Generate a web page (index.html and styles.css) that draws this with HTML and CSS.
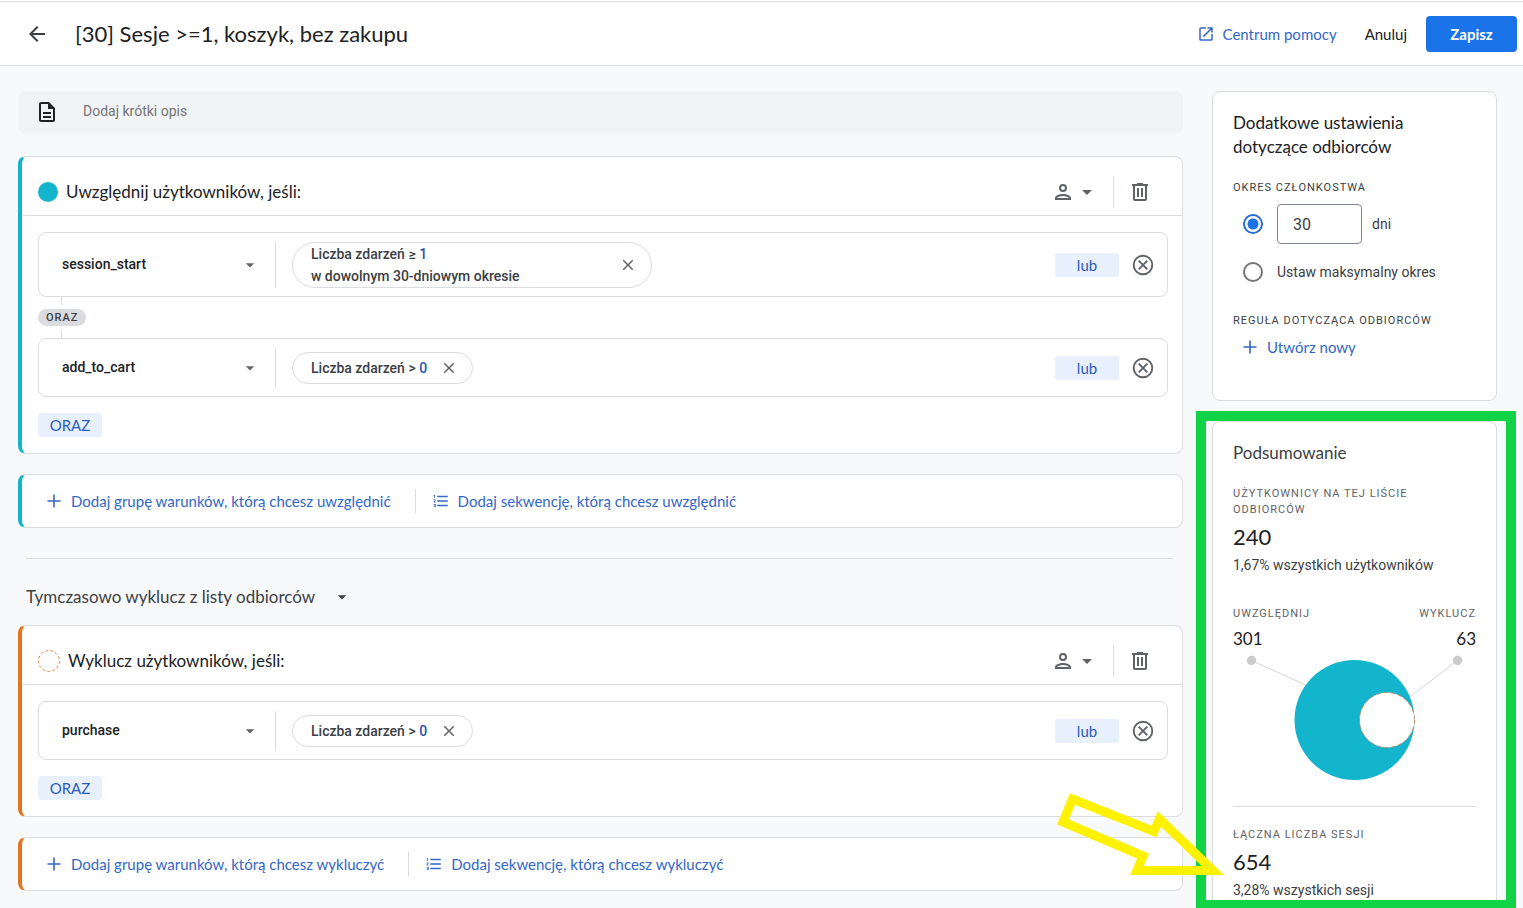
FILE: index.html
```html
<!DOCTYPE html>
<html lang="pl">
<head>
<meta charset="utf-8">
<title>Edytor listy odbiorców</title>
<link rel="stylesheet" href="styles.css">
</head>
<body>
<svg class="sprite" aria-hidden="true">
  <symbol id="i-caret" viewBox="0 0 24 24"><path d="M7 10l5 5 5-5z"/></symbol>
  <symbol id="i-close" viewBox="0 0 24 24"><path d="M19 6.41L17.59 5 12 10.59 6.41 5 5 6.41 10.59 12 5 17.59 6.41 19 12 13.41 17.59 19 19 17.59 13.41 12z"/></symbol>
  <symbol id="i-remove" viewBox="0 0 24 24"><path d="M7.700 7.700l8.600 8.600M16.300 7.700l-8.600 8.600M21.300 12a9.300 9.300 0 1 1-18.600 0 9.300 9.300 0 0 1 18.600 0z" fill="none" stroke="currentColor" stroke-width="1.900"/></symbol>
  <symbol id="i-plus" viewBox="0 0 14 14"><path d="M6.2 0.5h1.6v5.7h5.7v1.6H7.8v5.7H6.2V7.800H.5V6.200h5.700z"/></symbol>
  <symbol id="i-list" viewBox="0 0 24 24"><path d="M2 17h2v.5H3v1h1v.5H2v1h3v-4H2zm1-9h1V4H2v1h1zm-1 3h1.800L2 13.100v.9h3v-1H3.200L5 10.900V10H2zM7 5v2h14V5zm0 14h14v-2H7zm0-6h14v-2H7z"/></symbol>
  <symbol id="i-person" viewBox="0 0 24 24"><path d="M12 6a2 2 0 1 1 0 4 2 2 0 0 1 0-4m0 10c2.700 0 5.800 1.290 6 2H6c.23-.72 3.310-2 6-2m0-12a4 4 0 1 0 0 8 4 4 0 0 0 0-8zm0 10c-2.670 0-8 1.340-8 4v2h16v-2c0-2.660-5.330-4-8-4z"/></symbol>
  <symbol id="i-trash" viewBox="0 0 24 24"><path d="M15 4V3H9v1H4v2h1v13a2 2 0 0 0 2 2h10a2 2 0 0 0 2-2V6h1V4zm2 15H7V6h10zM9 8h2v9H9zm4 0h2v9h-2z"/></symbol>
</svg>

<header class="topbar">
  <button class="icon-btn back" aria-label="Wstecz"><svg class="icon" viewBox="0 0 24 24"><path d="M20 11H7.830l5.590-5.590L12 4l-8 8 8 8 1.410-1.410L7.830 13H20z"/></svg></button>
  <h1 class="title">[30] Sesje &gt;=1, koszyk, bez zakupu</h1>
  <a class="help" href="#"><svg class="icon-18" viewBox="0 0 24 24"><path d="M19 19H5V5h7V3H5a2 2 0 0 0-2 2v14a2 2 0 0 0 2 2h14a2 2 0 0 0 2-2v-7h-2zM14 3v2h3.590l-9.830 9.830 1.410 1.410L19 6.410V10h2V3z"/></svg>Centrum pomocy</a>
  <button class="cancel">Anuluj</button>
  <button class="save">Zapisz</button>
</header>

<div class="layout">
  <main class="main">
    <label class="describe">
      <svg class="icon" viewBox="0 0 24 24"><path d="M8 16h8v2H8zm0-4h8v2H8zM14 2H6a2 2 0 0 0-2 2v16a2 2 0 0 0 2 2h12a2 2 0 0 0 2-2V8zm4 18H6V4h7v5h5z"/></svg>
      <input class="describe-input" type="text" placeholder="Dodaj krótki opis" aria-label="Dodaj krótki opis">
    </label>

    <section class="card include group">
      <div class="group-head">
        <span class="dot"></span>
        <h2 class="group-title">Uwzględnij użytkowników, jeśli:</h2>
        <button class="icon-btn scope" aria-label="Zakres"><svg class="icon"><use href="#i-person"/></svg><svg class="icon"><use href="#i-caret"/></svg></button>
        <button class="icon-btn trash" aria-label="Usuń grupę"><svg class="icon"><use href="#i-trash"/></svg></button>
      </div>
      <div class="group-body">
        <div class="row">
          <div class="event"><select class="event-select" aria-label="Zdarzenie"><option>session_start</option></select><svg class="icon-20"><use href="#i-caret"/></svg></div>
          <div class="pill wide"><span>Liczba zdarzeń ≥ <b>1</b><br>w dowolnym 30-dniowym okresie</span><button class="icon-btn" aria-label="Usuń parametr"><svg class="icon-18"><use href="#i-close"/></svg></button></div>
          <button class="chip or">lub</button>
          <button class="icon-btn remove" aria-label="Usuń warunek"><svg class="icon"><use href="#i-remove"/></svg></button>
        </div>
        <div class="joint"><span class="tag">ORAZ</span></div>
        <div class="row">
          <div class="event"><select class="event-select" aria-label="Zdarzenie"><option>add_to_cart</option></select><svg class="icon-20"><use href="#i-caret"/></svg></div>
          <div class="pill"><span>Liczba zdarzeń &gt; <b>0</b></span><button class="icon-btn" aria-label="Usuń parametr"><svg class="icon-18"><use href="#i-close"/></svg></button></div>
          <button class="chip or">lub</button>
          <button class="icon-btn remove" aria-label="Usuń warunek"><svg class="icon"><use href="#i-remove"/></svg></button>
        </div>
        <button class="chip and">ORAZ</button>
      </div>
    </section>

    <section class="card include adder">
      <button class="link"><svg class="icon-14"><use href="#i-plus"/></svg>Dodaj grupę warunków, którą chcesz uwzględnić</button>
      <button class="link seq"><svg class="icon-18"><use href="#i-list"/></svg>Dodaj sekwencję, którą chcesz uwzględnić</button>
    </section>

    <hr class="split">

    <div class="exclude-mode">
      <select class="mode-select" aria-label="Tryb wykluczania"><option>Tymczasowo wyklucz z listy odbiorców</option></select><svg class="icon-20"><use href="#i-caret"/></svg>
    </div>

    <section class="card exclude group">
      <div class="group-head">
        <svg class="ring" viewBox="0 0 22 22"><circle cx="11" cy="11" r="10.400"/></svg>
        <h2 class="group-title">Wyklucz użytkowników, jeśli:</h2>
        <button class="icon-btn scope" aria-label="Zakres"><svg class="icon"><use href="#i-person"/></svg><svg class="icon"><use href="#i-caret"/></svg></button>
        <button class="icon-btn trash" aria-label="Usuń grupę"><svg class="icon"><use href="#i-trash"/></svg></button>
      </div>
      <div class="group-body">
        <div class="row">
          <div class="event"><select class="event-select" aria-label="Zdarzenie"><option>purchase</option></select><svg class="icon-20"><use href="#i-caret"/></svg></div>
          <div class="pill"><span>Liczba zdarzeń &gt; <b>0</b></span><button class="icon-btn" aria-label="Usuń parametr"><svg class="icon-18"><use href="#i-close"/></svg></button></div>
          <button class="chip or">lub</button>
          <button class="icon-btn remove" aria-label="Usuń warunek"><svg class="icon"><use href="#i-remove"/></svg></button>
        </div>
        <button class="chip and">ORAZ</button>
      </div>
    </section>

    <section class="card exclude adder">
      <button class="link"><svg class="icon-14"><use href="#i-plus"/></svg>Dodaj grupę warunków, którą chcesz wykluczyć</button>
      <button class="link seq"><svg class="icon-18"><use href="#i-list"/></svg>Dodaj sekwencję, którą chcesz wykluczyć</button>
    </section>
  </main>

  <aside class="side">
    <section class="panel settings">
      <h2 class="panel-title">Dodatkowe ustawienia dotyczące odbiorców</h2>
      <h3 class="caps">Okres członkostwa</h3>
      <div class="option">
        <input class="radio" type="radio" name="period" id="p-days" checked>
        <input class="days" type="text" value="30" aria-label="Liczba dni">
        <label for="p-days">dni</label>
      </div>
      <div class="option max">
        <input class="radio" type="radio" name="period" id="p-max">
        <label for="p-max">Ustaw maksymalny okres</label>
      </div>
      <h3 class="caps">Reguła dotycząca odbiorców</h3>
      <button class="link create"><svg class="icon-14"><use href="#i-plus"/></svg>Utwórz nowy</button>
    </section>

    <div class="highlight">
      <section class="panel summary">
        <h2 class="panel-title">Podsumowanie</h2>
        <h3 class="caps">Użytkownicy na tej liście odbiorców</h3>
        <p class="big">240</p>
        <p class="note">1,67% wszystkich użytkowników</p>
        <div class="ends">
          <div><h3 class="caps">Uwzględnij</h3><p class="mid">301</p></div>
          <div class="end-right"><h3 class="caps">Wyklucz</h3><p class="mid">63</p></div>
        </div>
        <svg class="venn" viewBox="0 0 243 132">
          <path class="leader" d="M18.500 8.500L75 34M224.500 8.500L170 50"/>
          <circle class="leader-dot" cx="18.500" cy="8.500" r="4.700"/>
          <circle class="leader-dot" cx="224.500" cy="8.500" r="4.700"/>
          <circle class="venn-in" cx="121.500" cy="68" r="60"/>
          <circle class="venn-out" cx="154" cy="68" r="27.500"/>
        </svg>
        <h3 class="caps total">Łączna liczba sesji</h3>
        <p class="big">654</p>
        <p class="note">3,28% wszystkich sesji</p>
      </section>
      <div class="frame"></div>
      <svg class="pointer" viewBox="0 0 180 95" aria-hidden="true"><path d="M22.500 14L13 37 93 71 87 85.500H163L109.500 34 104 46.500z"/></svg>
    </div>
  </aside>
</div>
</body>
</html>
```

FILE: styles.css
```css
:root {
  --display: Lato, "Open Sans", sans-serif;
  --body: Roboto, "Liberation Sans", sans-serif;
  --ink: #202124;
  --muted: #5f6368;
  --line: #dadce0;
  --blue: #3367c8;
  --teal: #12b5cb;
  --orange: #e37420;
}

* { box-sizing: border-box; }

body {
  margin: 0;
  background: #f8f9fb;
  color: var(--ink);
  font: 14px/20px var(--body);
}

h1, h2, h3, p { margin: 0; font-weight: 400; }

button, input, select { font: inherit; color: inherit; }

button {
  border: 0;
  padding: 0;
  background: none;
  cursor: pointer;
}

svg { display: block; flex: none; fill: currentColor; }

.sprite { position: absolute; width: 0; height: 0; }
.icon { width: 24px; height: 24px; }
.icon-20 { width: 20px; height: 20px; }
.icon-18 { width: 18px; height: 18px; }
.icon-14 { width: 14px; height: 14px; }
.icon-btn { display: flex; color: var(--muted); }

.topbar {
  display: flex;
  align-items: center;
  height: 66px;
  padding: 2px 6px 0 25px;
  background: #fff;
  border-bottom: 1px solid var(--line);
  border-top: 1px solid #fff;
  box-shadow: inset 0 1px var(--line);
  font-family: var(--display);
  font-size: 15px;
}

.back { color: #3c4043; }
.title { margin: 0 auto 0 26px; font-size: 22px; line-height: 28px; }
.help { display: flex; align-items: center; gap: 8px; color: var(--blue); text-decoration: none; }
.cancel { margin: 0 19px 0 28px; }

.save {
  width: 91px;
  height: 36px;
  border-radius: 4px;
  background: #1a73e8;
  color: #fff;
  font-weight: 700;
}

.layout {
  display: grid;
  grid-template-columns: minmax(0, 1fr) 285px;
  gap: 29px;
  align-items: start;
  padding: 25px 26px 0 18px;
}

.describe {
  display: flex;
  align-items: center;
  gap: 24px;
  height: 43px;
  margin-bottom: 22px;
  padding: 0 17px 2px;
  border-radius: 8px;
  background: #f1f3f4;
}

.describe-input {
  flex: 1;
  border: 0;
  padding: 0 0 2px;
  background: none;
  outline: 0;
}

.describe-input::placeholder { color: #757575; opacity: 1; }

.card {
  border: 1px solid var(--line);
  border-left-width: 4px;
  border-radius: 8px;
  background: #fff;
}

.include { border-left-color: var(--teal); }
.exclude { border-left-color: var(--orange); }

.group-head {
  display: flex;
  align-items: center;
  height: 59px;
  padding: 11px 30px 0 16px;
  border-bottom: 1px solid var(--line);
}

.dot { width: 20px; height: 20px; border-radius: 50%; background: var(--teal); }
.ring { width: 22px; height: 22px; fill: none; stroke: #dc8a3c; stroke-dasharray: 3 2; }

.group-title {
  margin: 0 auto 0 8px;
  font: 17px/24px var(--display);
}

.scope { padding-right: 14px; }
.trash { padding: 4px 0 4px 14px; border-left: 1px solid var(--line); }

.group-body { padding: 16px 14px 16px 16px; }

.row {
  display: flex;
  align-items: center;
  padding: 9px 12px 8px 0;
  border: 1px solid var(--line);
  border-radius: 8px;
}

.event {
  display: grid;
  flex: none;
  align-items: center;
  align-self: stretch;
  width: 237px;
  min-height: 40px;
  border-right: 1px solid var(--line);
  color: #5f6368;
}

.event > *, .exclude-mode > * { grid-area: 1 / 1; }
.event > svg, .exclude-mode > svg { justify-self: end; pointer-events: none; }
.event > svg { margin-right: 15px; }

.event-select, .mode-select {
  appearance: none;
  border: 0;
  background: none;
  outline: 0;
}

.event-select {
  width: 100%;
  padding: 0 40px 2px 23px;
  color: var(--ink);
  font-weight: 500;
}

.pill {
  display: flex;
  align-items: center;
  justify-content: space-between;
  gap: 13px;
  margin: 0 auto 0 16px;
  padding: 4px 14px 4px 18px;
  border: 1px solid var(--line);
  border-radius: 24px;
  color: #3c4043;
  font-weight: 500;
  line-height: 22px;
}

.wide { width: 360px; padding-top: 0; padding-bottom: 0; }
.pill b { color: #2a56a8; font-weight: 500; }

.chip {
  width: 64px;
  height: 24px;
  border-radius: 3px;
  background: #e8f0fe;
  color: #2a5cbf;
  font: 15px/24px var(--display);
}

.or { margin-right: 12px; }
.and { display: block; margin-top: 16px; }

.joint {
  display: flex;
  align-items: center;
  height: 41px;
  background: linear-gradient(var(--line), var(--line)) 23px 0 / 1px 100% no-repeat;
}

.tag {
  padding: 0 8px;
  border-radius: 9px;
  background: #dadce0;
  box-shadow: 0 0 0 4px #fff;
  color: #3c4043;
  font-size: 11px;
  font-weight: 500;
  line-height: 17px;
  letter-spacing: 1px;
}

.adder {
  display: flex;
  align-items: center;
  height: 54px;
  margin-top: 20px;
  padding: 0 25px;
}

.link {
  display: flex;
  align-items: center;
  gap: 10px;
  color: var(--blue);
  font: 15px/24px var(--display);
}

.seq {
  gap: 8px;
  margin-left: 24px;
  padding-left: 16px;
  border-left: 1px solid var(--line);
}

.split {
  height: 1px;
  margin: 30px 10px 26px 8px;
  border: 0;
  background: var(--line);
}

.exclude-mode {
  display: inline-grid;
  align-items: center;
  margin: 0 0 16px 8px;
  color: #3c4043;
}

.mode-select {
  padding: 0 36px 0 0;
  font: 17px/24px var(--display);
}

.panel {
  padding: 19px 20px;
  border: 1px solid var(--line);
  border-radius: 8px;
  background: #fff;
  color: #3c4043;
}

.settings { min-height: 310px; margin-bottom: 20px; }
.settings .panel-title { color: var(--ink); }
.panel-title { font: 17px/24px var(--display); }

.caps {
  margin-top: 21px;
  font-size: 11px;
  line-height: 16px;
  letter-spacing: 1px;
  text-transform: uppercase;
}

.option { display: flex; align-items: center; gap: 10px; margin-top: 8px; padding-left: 10px; }
.option .radio { margin-right: 4px; }
.max { height: 36px; margin-top: 10px; margin-bottom: 23px; }

.radio {
  appearance: none;
  flex: none;
  width: 20px;
  height: 20px;
  margin: 0;
  border: 2px solid #757575;
  border-radius: 50%;
}

.radio:checked {
  border-color: #2a6bd4;
  background: radial-gradient(circle, #1a73e8 5px, transparent 6px);
}

.days {
  width: 85px;
  height: 40px;
  padding: 0 15px;
  border: 1px solid #80868b;
  border-radius: 4px;
  background: #fff;
  font-size: 16px;
}

.create { margin: 6px 0 0 10px; }

.highlight { position: relative; }
.summary { padding-bottom: 8px; }
.summary .caps { color: #5f6368; }
.big { margin-top: 7px; color: var(--ink); font: 22px/24px var(--display); }
.note { margin-top: 6px; }
.ends { display: flex; justify-content: space-between; margin-top: 31px; }
.ends .caps { margin-top: 0; }
.end-right { text-align: right; }
.mid { margin-top: 5px; color: var(--ink); font: 17px/24px var(--display); }

.venn { width: 100%; margin-top: 1px; }
.leader { stroke: #d5d5d5; }
.leader-dot { fill: #ccc; }
.venn-in { fill: var(--teal); }
.venn-out { fill: #fff; stroke: #c98a60; stroke-dasharray: 4 3; }

.summary .total { margin-top: 22px; padding-top: 20px; border-top: 1px solid var(--line); }

.frame {
  position: absolute;
  inset: -10px -19px 0 -16px;
  border: 10px solid #10d445;
  border-bottom-width: 9px;
  pointer-events: none;
}

.pointer {
  position: absolute;
  top: 364px;
  left: -162px;
  width: 180px;
  height: 95px;
  fill: none;
  stroke: #fff200;
  stroke-width: 9;
  stroke-miterlimit: 10;
  pointer-events: none;
}
```
